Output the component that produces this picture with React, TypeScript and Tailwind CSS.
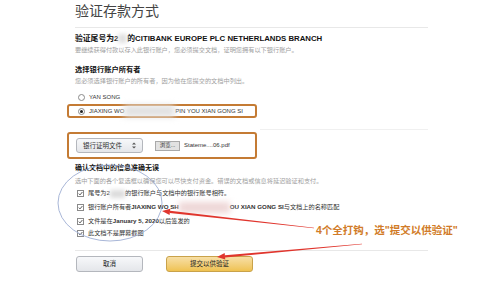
import React from "react"

type Pt = [number, number]

// tapered red arrow: thin tail, fat head
function Arrow({ from, to, color }: { from: Pt; to: Pt; color: string }) {
  const dx = to[0] - from[0]
  const dy = to[1] - from[1]
  const len = Math.hypot(dx, dy)
  const ux = dx / len
  const uy = dy / len
  const px = -uy
  const py = ux
  const headLen = 8
  const headW = 3.2
  const bx = to[0] - ux * headLen
  const by = to[1] - uy * headLen
  const shaft = [
    [from[0] + px * 0.3, from[1] + py * 0.3],
    [bx + px * 1.1, by + py * 1.1],
    [bx - px * 1.1, by - py * 1.1],
    [from[0] - px * 0.3, from[1] - py * 0.3],
  ]
  const head = [
    [to[0], to[1]],
    [bx + px * headW, by + py * headW],
    [bx - px * headW, by - py * headW],
  ]
  const s = (pts: number[][]) => pts.map((p) => p.join(",")).join(" ")
  return (
    <g fill={color}>
      <polygon points={s(shaft)} />
      <polygon points={s(head)} />
    </g>
  )
}

function Radio({ checked }: { checked?: boolean }) {
  return (
    <span className="ml-[3px] mr-[4px] flex h-[7px] w-[7px] items-center justify-center rounded-full border border-[#8a8a8a] bg-white">
      {checked && <span className="h-[3px] w-[3px] rounded-full bg-[#222]" />}
    </span>
  )
}

function Check() {
  return (
    <span className="ml-[2px] mr-[4px] flex h-[7px] w-[7px] shrink-0 items-center justify-center border border-[#8a8a8a] bg-white">
      <svg width="5" height="5" viewBox="0 0 10 10">
        <path d="M1.5 5.2 L4 7.8 L8.8 2" fill="none" stroke="#333" strokeWidth="1.6" />
      </svg>
    </span>
  )
}

export default function App() {
  return (
    <div className="relative h-[281px] w-[500px] overflow-hidden bg-white font-['Liberation_Sans','Noto_Sans_CJK_SC',sans-serif] text-[#111]">
      <div className="ml-[75px] flex w-[353px] flex-col">
        {/* Header */}
        <h1 className="h-[22px] text-[14px] font-normal leading-[22px] text-[#444]">验证存款方式</h1>
        <div className="mt-[5px] border-t border-[#e8e8e8]" />

        <div className="mt-[6px] whitespace-nowrap text-[7.8px] font-bold leading-[10px]">
          验证尾号为2
          <span className="inline-block h-[9px] w-[9px] bg-[#e0e0e0] align-middle blur-[2px]" />
          的CITIBANK EUROPE PLC NETHERLANDS BRANCH
        </div>
        <div className="mt-[1px] whitespace-nowrap text-[6.2px] leading-[9px] text-[#a0a0a0]">
          要继续获得付款以存入此银行账户，您必须提交文档，证明您拥有以下银行账户。
        </div>

        {/* Account owner */}
        <div className="mt-[11px] whitespace-nowrap text-[7.3px] font-bold leading-[10px]">选择银行账户所有者</div>
        <div className="mt-[1px] whitespace-nowrap text-[6.2px] leading-[9px] text-[#a0a0a0]">
          您必须选择银行账户的所有者，因为他在您提交的文档中列出。
        </div>

        <div className="mt-[7px] flex h-[10px] items-center text-[6px] text-[#333]">
          <Radio />
          <span>YAN SONG</span>
        </div>
        <div className="-ml-[8px] mt-[2px] flex h-[14px] w-[190px] items-center rounded-[3px] border-2 border-[#c47b34] pl-[6px] text-[6px] text-[#333]">
          <Radio checked />
          <span className="whitespace-nowrap">
            JIAXING WO
            <span className="inline-block h-[12px] w-[51px] bg-[#e2e2e2] align-middle blur-[3px]" />
            PIN YOU XIAN GONG SI
          </span>
        </div>
        <div className="ml-[185px] mt-[11px] border-t border-[#f0f0f0]" />

        {/* Document upload */}
        <div className="-ml-[8px] mt-[2px] flex h-[27px] w-[190px] items-center rounded-[3px] border-2 border-[#c47b34] pl-[7px]">
          <div className="flex h-[15px] w-[67px] items-center justify-between rounded-[3px] border border-[#b4b7bd] bg-gradient-to-b from-[#f7f8fa] to-[#e4e6ea] pl-[6px] pr-[6px] text-[6.5px] text-[#333]">
            <span>银行证明文件</span>
            <svg width="4" height="7" viewBox="0 0 4 7">
              <path d="M0 2.6 L2 0.6 L4 2.6 Z M0 4.4 L2 6.4 L4 4.4 Z" fill="#555" />
            </svg>
          </div>
          <div className="ml-[12px] flex h-[10px] w-[25px] items-center justify-center border border-[#a9a9a9] bg-[#e2e2e2] text-[5.5px] text-[#333]">
            浏览...
          </div>
          <span className="ml-[4px] text-[6px] text-[#333]">Stateme....06.pdf</span>
        </div>

        {/* Confirm */}
        <div className="mt-[4px] whitespace-nowrap text-[7px] font-bold leading-[10px]">确认文档中的信息准确无误</div>
        <div className="mt-[3px] whitespace-nowrap text-[6.2px] leading-[9px] text-[#a0a0a0]">
          选中下面的各个复选框以确保您可以尽快支付资金。错误的文档或信息将延迟验证和支付。
        </div>

        <div className="mt-[3px] flex h-[10px] items-center whitespace-nowrap text-[6.2px] text-[#333]">
          <Check />
          <span>
            尾号为2
            <span className="inline-block h-[8px] w-[15px] bg-[#dcdcdc] align-middle blur-[2px]" />
            的银行账户与文档中的银行账号相符。
          </span>
        </div>
        <div className="mt-[4px] flex h-[10px] items-center whitespace-nowrap text-[6.2px] text-[#333]">
          <Check />
          <span>
            银行账户所有者<b>JIAXING WO SH</b>
            <span className="inline-block h-[11px] w-[51px] bg-[#eed6d6] align-middle blur-[3px]" />
            <b>OU XIAN GONG SI</b>与文档上的名称匹配
          </span>
        </div>
        <div className="mt-[4px] flex h-[10px] items-center whitespace-nowrap text-[6.2px] text-[#333]">
          <Check />
          <span>
            文件是在<b>January 5, 2020</b>以后签发的
          </span>
        </div>
        <div className="mt-[2px] flex h-[10px] items-center whitespace-nowrap text-[6.2px] text-[#333]">
          <Check />
          <span>此文档不是屏幕截图</span>
        </div>

        <div className="mt-[12px] border-t border-[#e8e8e8]" />

        {/* Buttons */}
        <div className="mt-[5px] flex gap-[23px] pl-[1px]">
          <button className="flex h-[16px] w-[67px] items-center justify-center rounded-[3px] border border-[#b4b7bd] bg-gradient-to-b from-[#f7f8fa] to-[#e4e6ea] text-[6.5px] text-[#222]">
            取消
          </button>
          <button className="flex h-[16px] w-[87px] items-center justify-center rounded-[3px] border border-[#c9a24a] bg-gradient-to-b from-[#f7dfa5] to-[#efc250] text-[6.5px] text-[#222]">
            提交以供验证
          </button>
        </div>
      </div>

      {/* Annotations drawn over the screenshot */}
      <svg className="pointer-events-none absolute left-0 top-0" width="500" height="281">
        <ellipse cx="110" cy="203" rx="52" ry="38" fill="none" stroke="#9eaed2" strokeWidth="0.9" />
        <Arrow from={[314, 228]} to={[162, 211]} color="#e0352d" />
        <Arrow from={[362, 244]} to={[217, 257]} color="#e0352d" />
      </svg>
      <div className="absolute left-[316px] top-[224px] whitespace-nowrap text-[10.5px] font-bold leading-[12px] text-[#d17b28]">
        4个全打钩，选"提交以供验证"
      </div>
    </div>
  )
}
